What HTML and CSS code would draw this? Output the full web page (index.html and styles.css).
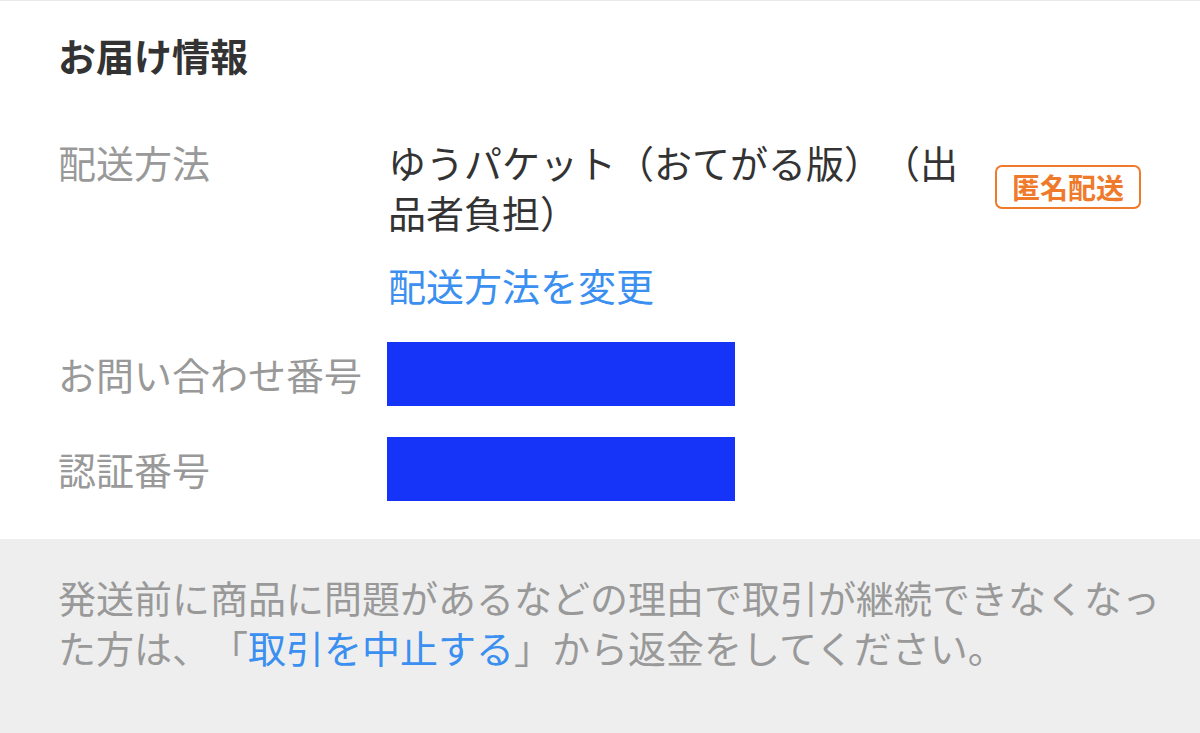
FILE: index.html
```html
<!DOCTYPE html>
<html lang="ja">
<head>
    <meta charset="UTF-8">
    <meta name="viewport" content="width=device-width, initial-scale=1.0">
    <title>お届け情報</title>
    <link rel="stylesheet" href="styles.css">
</head>
<body>
    <section class="info">
        <h2>お届け情報</h2>
        <div class="rows">
            <div class="row">
                <div class="label">配送方法</div>
                <div class="value">
                    <div class="method">
                        <span class="method-name">ゆうパケット（おてがる版）（出品者負担）</span>
                        <span class="badge">匿名配送</span>
                    </div>
                    <a class="link change" href="#">配送方法を変更</a>
                </div>
            </div>
            <div class="row row-box">
                <div class="label">お問い合わせ番号</div>
                <div class="value"><div class="masked"></div></div>
            </div>
            <div class="row row-box">
                <div class="label">認証番号</div>
                <div class="value"><div class="masked"></div></div>
            </div>
        </div>
    </section>
    <section class="notice">
        <p>発送前に商品に問題があるなどの理由で取引が継続できなくなった方は、「<a class="link" href="#">取引を中止する</a>」から返金をしてください。</p>
    </section>
</body>
</html>
```

FILE: styles.css
```css
body { margin: 0; font-family: "Noto Sans CJK JP", "Noto Sans", sans-serif; background: #fff; text-spacing-trim: space-all; }
.info { border-top: 1px solid #e8e8e8; padding: 29px 59px 38px 58px; }
.info h2 { margin: 0; font-size: 38px; line-height: 50px; font-weight: 700; color: #333; }
.rows { margin-top: 57px; }
.row { display: grid; grid-template-columns: 330px 1fr; font-size: 38px; line-height: 50px; }
.row-box { align-items: center; margin-top: 32px; }
.row-box + .row-box { margin-top: 31px; }
.label { color: #999; white-space: nowrap; }
.method { display: flex; align-items: center; }
.method-name { flex: 1; color: #333; padding-right: 30px; }
.badge { flex: none; border: 2.5px solid #f07a2b; border-radius: 7px; color: #f07a2b; font-size: 28px; font-weight: 700; line-height: 40px; padding: 0 15px; }
.link { color: #3a8ff0; text-decoration: none; }
.change { display: inline-block; margin-top: 23px; }
.masked { width: 348px; height: 64px; margin-left: -1px; background: #1534f7; }
.notice { background: #eeeeee; padding: 33px 36px 61px 58px; }
.notice p { margin: 0; font-size: 38px; line-height: 50px; color: #999; }
```
